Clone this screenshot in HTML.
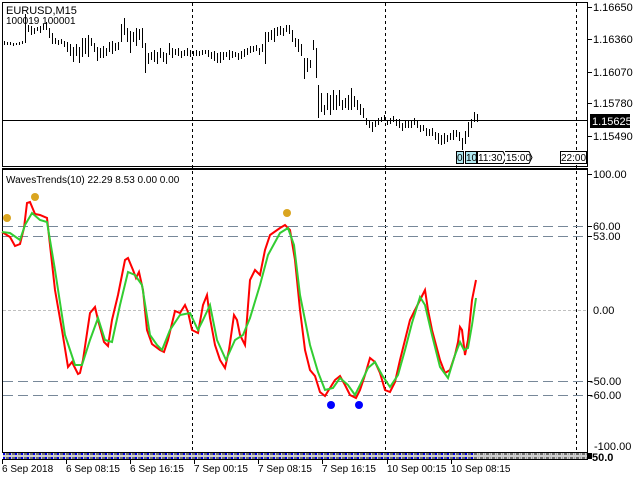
<!DOCTYPE html>
<html><head><meta charset="utf-8"><style>
body{margin:0;width:640px;height:480px;background:#fff;overflow:hidden;font-family:"Liberation Sans",sans-serif}
svg{display:block}
text{font-family:"Liberation Sans",sans-serif;font-size:11px;fill:#000}
.t{font-size:10px}
</style></head><body>
<svg width="640" height="480" xmlns="http://www.w3.org/2000/svg">
<g stroke="#000" stroke-width="1" fill="none">
<rect x="2.5" y="2.5" width="585" height="164"/>
<line x1="2" y1="168.5" x2="588" y2="168.5"/>
<rect x="2.5" y="169.5" width="585" height="283"/>
</g>
<g stroke="#000" stroke-dasharray="3,3">
<line x1="192.5" y1="3" x2="192.5" y2="452"/>
<line x1="385.5" y1="3" x2="385.5" y2="452"/>
<line x1="576.5" y1="3" x2="576.5" y2="452"/>
</g>
<line x1="2" y1="120.5" x2="587" y2="120.5" stroke="#000"/>
<path stroke="#000" stroke-width="1" fill="none" d="
M4.5 41V45M7.5 42V45M10.5 42V45M13.5 43V46M16.5 43V45M19.5 42V45M22.5 41V44M25.5 14V43M28.5 25V32M31.5 26V35M34.5 28V34M37.5 27V31M40.5 26V33M43.5 24V30M46.5 22V30M49.5 28V38M52.5 33V44M55.5 38V44M58.5 40V45M61.5 39V44M64.5 41V47M67.5 42V52M70.5 44V56M73.5 47V62M76.5 44V56M79.5 47V63M82.5 38V57M85.5 38V54M88.5 35V57M91.5 38V46M94.5 43V52M97.5 47V61M100.5 48V58M103.5 46V58M106.5 48V56M109.5 42V52M112.5 41V54M115.5 43V51M118.5 42V50M121.5 24V42M124.5 18V35M127.5 28V42M130.5 31V53M133.5 32V42M136.5 28V46M139.5 29V40M142.5 28V48M145.5 43V73M148.5 53V64M151.5 52V60M154.5 50V62M157.5 52V64M160.5 48V58M163.5 52V62M166.5 53V64M169.5 43V55M172.5 48V58M175.5 49V55M178.5 48V56M181.5 51V58M184.5 50V56M187.5 48V56M190.5 50V57M193.5 51V56M196.5 50V56M199.5 51V56M202.5 50V55M205.5 50V54M208.5 50V57M211.5 52V59M214.5 51V61M217.5 53V63M220.5 52V63M223.5 52V60M226.5 52V57M229.5 50V60M232.5 51V58M235.5 52V57M238.5 53V60M241.5 51V59M244.5 49V57M247.5 48V55M250.5 46V53M253.5 46V52M256.5 45V51M259.5 48V55M262.5 44V52M265.5 32V64M268.5 32V42M271.5 30V40M274.5 28V42M277.5 27V36M280.5 26V35M283.5 28V36M286.5 25V32M289.5 25V34M292.5 30V42M295.5 38V47M298.5 39V52M301.5 44V56M304.5 58V79M307.5 58V72M310.5 60V68M313.5 40V50M316.5 48V78M318.5 85V118M321.5 93V112M324.5 105V115M327.5 93V110M330.5 95V115M333.5 90V110M336.5 95V110M339.5 90V106M342.5 100V110M345.5 98V108M348.5 95V110M351.5 88V110M354.5 96V107M357.5 100V110M360.5 104V115M363.5 108V118M366.5 118V125M369.5 120V128M372.5 122V132M375.5 120V127M378.5 118V125M381.5 117V122M384.5 115V120M387.5 120V125M390.5 118V124M393.5 116V122M396.5 119V126M399.5 119V128M402.5 123V131M405.5 120V128M408.5 120V128M411.5 120V128M414.5 118V125M417.5 120V128M420.5 125V132M423.5 125V131M426.5 128V136M429.5 129V136M432.5 128V136M435.5 132V140M438.5 133V144M441.5 135V145M444.5 133V144M447.5 135V142M450.5 133V140M453.5 130V140M456.5 130V137M459.5 132V141M462.5 138V150M465.5 131V144M468.5 122V137M471.5 119V128M474.5 112V122M477.5 114V122"/>
<text x="6" y="14">EURUSD,M15</text>
<text x="6" y="24" class="t">100019  100001</text>
<g class="t">
<rect x="456.5" y="151.5" width="7" height="12" fill="#b0e8f0" stroke="#000"/><text x="457" y="161" class="t">0</text>
<rect x="465.5" y="151.5" width="11" height="12" fill="#b0e8f0" stroke="#000"/><text x="466" y="161" class="t">10</text>
<path d="M477.5 151.5H503L506 157.5L503 163.5H477.5Z" fill="#fff" stroke="#000"/><text x="478" y="161" class="t">11:30</text>
<path d="M505 151.5H529L532 157.5L529 163.5H505" fill="#fff" stroke="#000"/><text x="506" y="161" class="t">15:00</text>
<rect x="560.5" y="151.5" width="26" height="12" fill="#fff" stroke="#000"/><text x="561" y="161" class="t">22:00</text>
</g>
<g stroke="#000">
<line x1="588" y1="7.5" x2="592" y2="7.5"/><line x1="588" y1="39.5" x2="592" y2="39.5"/><line x1="588" y1="72.5" x2="592" y2="72.5"/><line x1="588" y1="103.5" x2="592" y2="103.5"/><line x1="588" y1="136.5" x2="592" y2="136.5"/>
<line x1="588" y1="174.5" x2="592" y2="174.5"/><line x1="588" y1="226.5" x2="592" y2="226.5"/><line x1="588" y1="236.5" x2="592" y2="236.5"/><line x1="588" y1="381.5" x2="592" y2="381.5"/><line x1="588" y1="395.5" x2="592" y2="395.5"/>
</g>
<text x="593" y="11">1.16650</text><text x="593" y="43">1.16360</text><text x="593" y="76">1.16070</text><text x="593" y="107">1.15780</text><text x="593" y="140">1.15490</text>
<rect x="590" y="114" width="40" height="14" fill="#000"/><text x="592" y="125" style="fill:#fff">1.15625</text>
<text x="593" y="178">100.00</text><text x="593" y="230">60.00</text><text x="593" y="240">53.00</text><text x="593" y="314">0.00</text><text x="590" y="385">-50.00</text><text x="590" y="399">-60.00</text><text x="594" y="450">-100.00</text>
<text x="6" y="183" class="t">WavesTrends(10) 22.29 8.53 0.00 0.00</text>
<g stroke="#778899" stroke-dasharray="10,5">
<line x1="3" y1="226.5" x2="587" y2="226.5"/><line x1="3" y1="236.5" x2="587" y2="236.5"/>
<line x1="3" y1="381.5" x2="587" y2="381.5"/><line x1="3" y1="395.5" x2="587" y2="395.5"/>
</g>
<line x1="3" y1="310.5" x2="587" y2="310.5" stroke="#c0c0c0" stroke-dasharray="3,2"/>
<polyline fill="none" stroke="#ff0000" stroke-width="2" points="2,232 10,237 15,246 20,244 24,228 27,203 30,202 35,214 40,215 47,218 50,245 55,290 62,330 68,367 72,362 75,368 78,374 80,373 83,360 90,313 95,307 98,320 104,342 108,346 112,320 118,295 125,260 128,258 133,270 136,278 139,272 143,290 147,330 152,344 160,350 164,352 168,340 175,311 180,313 185,305 188,312 192,330 198,333 203,305 207,295 210,318 215,345 220,360 225,368 229,350 234,315 237,320 240,335 245,345 250,280 255,270 260,275 265,250 270,235 280,228 285,225 290,230 295,260 300,310 305,350 310,370 315,376 320,392 325,396 330,388 335,380 340,376 345,385 350,395 356,398 360,390 365,375 370,358 375,362 380,373 385,390 390,392 395,382 400,360 410,320 415,310 420,300 425,290 428,310 432,330 440,360 445,373 450,370 455,355 458,342 460,327 462,330 465,355 468,340 472,300 476,280"/>
<polyline fill="none" stroke="#32cd32" stroke-width="2" points="2,232 10,233 20,240 25,225 32,213 40,220 47,222 55,270 65,335 75,365 82,365 90,340 98,318 105,340 112,342 120,305 128,272 135,275 142,285 150,335 157,345 162,350 170,330 180,315 190,313 198,330 203,320 210,305 217,340 226,360 235,340 243,335 250,318 260,285 268,255 280,233 288,228 294,245 300,295 310,345 318,372 325,390 333,388 340,378 348,385 355,395 360,385 368,368 375,362 382,375 390,387 398,375 405,350 412,323 420,297 425,305 432,335 440,367 448,378 455,355 460,342 464,350 468,348 472,325 476,298"/>
<g fill="#daa520"><circle cx="7" cy="218" r="4"/><circle cx="35" cy="197" r="4"/><circle cx="287" cy="213" r="4"/></g>
<g fill="#0000ff"><circle cx="331" cy="405" r="4"/><circle cx="359" cy="405" r="4"/></g>
<defs><pattern id="p" width="6" height="6" patternUnits="userSpaceOnUse"><rect width="6" height="6" fill="#d0d0d0"/><rect x="0" y="1" width="3" height="4" fill="#707070"/><rect x="3" y="1" width="2" height="4" fill="#0000e0"/></pattern>
<pattern id="q" width="6" height="6" patternUnits="userSpaceOnUse"><rect width="6" height="6" fill="#d0d0d0"/><rect x="0" y="1" width="3" height="4" fill="#707070"/><rect x="4" y="1" width="1" height="4" fill="#a0a0a0"/></pattern></defs>
<rect x="3" y="453" width="474" height="6" fill="url(#p)"/>
<rect x="477" y="453" width="110" height="6" fill="url(#q)"/>
<line x1="2" y1="459.5" x2="588" y2="459.5" stroke="#000"/>
<rect x="587" y="453" width="5" height="6" fill="#000"/>
<text x="592" y="461" font-weight="bold">50.0</text>
<g stroke="#000"><line x1="2.5" y1="460" x2="2.5" y2="464"/><line x1="66.5" y1="460" x2="66.5" y2="464"/><line x1="130.5" y1="460" x2="130.5" y2="464"/><line x1="194.5" y1="460" x2="194.5" y2="464"/><line x1="258.5" y1="460" x2="258.5" y2="464"/><line x1="322.5" y1="460" x2="322.5" y2="464"/><line x1="387.5" y1="460" x2="387.5" y2="464"/><line x1="451.5" y1="460" x2="451.5" y2="464"/></g>
<g class="t"><text x="2" y="472" class="t">6 Sep 2018</text><text x="66" y="472" class="t">6 Sep 08:15</text><text x="130" y="472" class="t">6 Sep 16:15</text><text x="194" y="472" class="t">7 Sep 00:15</text><text x="258" y="472" class="t">7 Sep 08:15</text><text x="322" y="472" class="t">7 Sep 16:15</text><text x="387" y="472" class="t">10 Sep 00:15</text><text x="451" y="472" class="t">10 Sep 08:15</text></g>
</svg>
</body></html>
